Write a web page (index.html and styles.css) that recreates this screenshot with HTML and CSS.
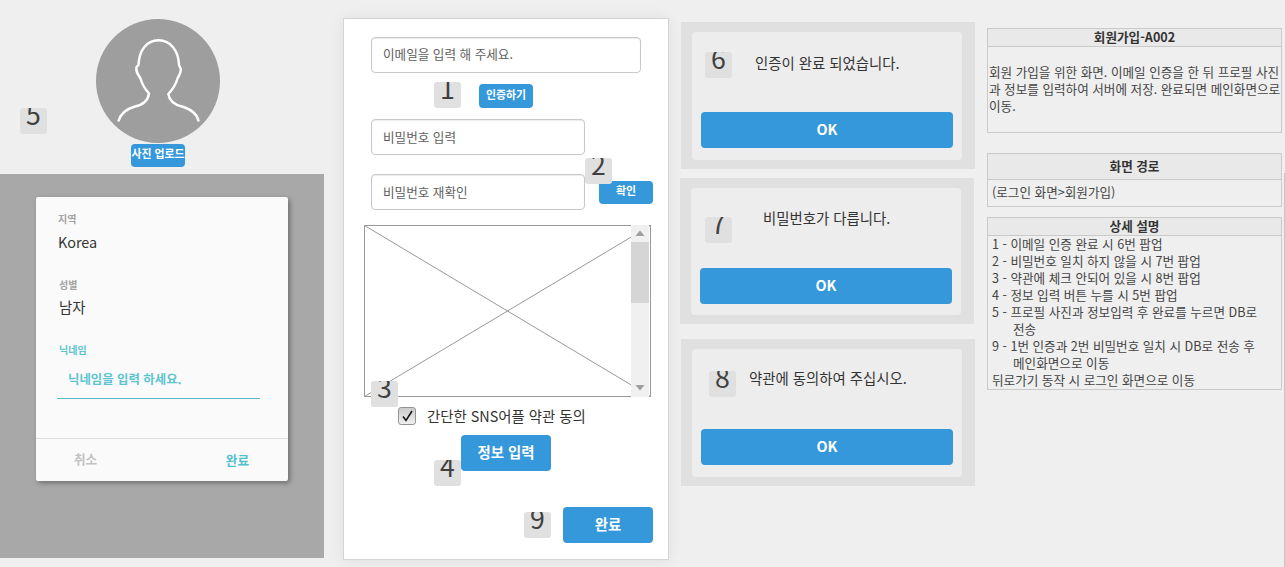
FILE: index.html
```html
<!DOCTYPE html>
<html lang="ko">
  <head>
    <meta charset="UTF-8" />
    <meta name="viewport" content="width=device-width, initial-scale=1.0" />
    <title>회원가입-A002</title>
    <link rel="stylesheet" href="styles.css">
  </head>
  <body>
    <div class="board">
      <section class="profile">
        <span class="badge badge-5">5</span>
        <svg class="avatar" viewBox="0 0 124 124">
          <circle cx="62" cy="62" r="62" fill="#9e9e9e" />
          <path
            d="M22.3 102.5 C24.5 94 32 89.500 39 87.500 C46 86 52 82 53 74.500 C49 70 46 65 44.500 59.500 C41.500 55 39.500 52 40.500 48 L42.500 46 C43 32 50 21.300 62.500 21.300 C75 21.300 82.500 32 83 46 L84.800 50 C85 53.500 83.500 56 81.500 59.500 C80 65 77 70 72.300 75 C73.500 82 79 86 86 87.500 C93 89.500 101 94 102.700 102.500"
            fill="none" stroke="#fff" stroke-width="2.4" stroke-linejoin="round" />
        </svg>
        <button class="btn btn-small btn-upload">사진 업로드</button>

        <div class="overlay">
          <div class="dialog">
            <div class="dialog-body">
              <label class="caption">지역</label>
              <div class="value">Korea</div>
              <label class="caption caption-gender">성별</label>
              <div class="value value-gender">남자</div>
              <label class="caption caption-active">닉네임</label>
              <div class="nickname">닉네임을 입력 하세요.</div>
            </div>
            <div class="dialog-footer">
              <span class="cancel">취소</span>
              <span class="done">완료</span>
            </div>
          </div>
        </div>
      </section>

      <section class="phone">
        <div class="input input-email">이메일을 입력 해 주세요.</div>
        <button class="btn btn-small btn-verify">인증하기</button>
        <div class="input">비밀번호 입력</div>
        <div class="confirm-row">
          <div class="input">비밀번호 재확인</div>
          <button class="btn btn-small">확인</button>
        </div>

        <div class="terms">
          <svg class="cross" viewBox="0 0 287 172">
            <path d="M.5 .5H286.500V171.500H.5Z M.5 .5L286.500 171.500 M286.500 .5L.5 171.500" />
          </svg>
          <div class="scrollbar">
            <svg viewBox="0 0 18 17"><path d="M4.500 11L9 5.500L13.500 11Z" /></svg>
            <div class="thumb"></div>
            <svg viewBox="0 0 18 17"><path d="M4.500 5L9 10.500L13.500 5Z" /></svg>
          </div>
        </div>

        <div class="agree">
          <span class="checkbox">
            <svg viewBox="0 0 16 16"><path d="M4 8.500L7 12.500L13 3" /></svg>
          </span>
          <span>간단한 SNS어플 약관 동의</span>
        </div>
        <button class="btn btn-info">정보 입력</button>
        <button class="btn btn-done">완료</button>

        <span class="badge badge-1">1</span>
        <span class="badge badge-2">2</span>
        <span class="badge badge-3">3</span>
        <span class="badge badge-4">4</span>
        <span class="badge badge-9">9</span>
      </section>

      <section class="popups">
        <div class="popup">
          <div class="popup-box">
            <p class="message-verified">인증이 완료 되었습니다.</p>
            <button class="btn">OK</button>
          </div>
          <span class="badge badge-6">6</span>
        </div>
        <div class="popup popup-password">
          <div class="popup-box">
            <p class="message-password">비밀번호가 다릅니다.</p>
            <button class="btn">OK</button>
          </div>
          <span class="badge badge-7">7</span>
        </div>
        <div class="popup">
          <div class="popup-box">
            <p class="message-terms">약관에 동의하여 주십시오.</p>
            <button class="btn">OK</button>
          </div>
          <span class="badge badge-8">8</span>
        </div>
      </section>

      <aside class="notes">
        <div class="note note-summary">
          <h2>회원가입-A002</h2>
          <p>회원 가입을 위한 화면. 이메일 인증을 한 뒤 프로필 사진<br>과 정보를 입력하여 서버에 저장. 완료되면 메인화면으로<br>이동.</p>
        </div>
        <div class="note note-path">
          <h2>화면 경로</h2>
          <p>(로그인 화면&gt;회원가입)</p>
        </div>
        <div class="note note-detail">
          <h2>상세 설명</h2>
          <ul>
            <li>1 - 이메일 인증 완료 시 6번 팝업</li>
            <li>2 - 비밀번호 일치 하지 않을 시 7번 팝업</li>
            <li>3 - 약관에 체크 안되어 있을 시 8번 팝업</li>
            <li>4 - 정보 입력 버튼 누를 시 5번 팝업</li>
            <li>5 - 프로필 사진과 정보입력 후 완료를 누르면 DB로<br>전송</li>
            <li>9 - 1번 인증과 2번 비밀번호 일치 시 DB로 전송 후<br>메인화면으로 이동</li>
            <li>뒤로가기 동작 시 로그인 화면으로 이동</li>
          </ul>
        </div>
      </aside>
      <div class="edge"></div>
    </div>
  </body>
</html>
```

FILE: styles.css
```css
* {
  margin: 0;
  padding: 0;
  box-sizing: border-box;
}
body {
  background-color: #efefef;
  color: #333;
  font-family: "Noto Sans CJK KR", "Noto Sans", sans-serif;
  font-size: 12.6px;
}
.board {
  display: flex;
  align-items: flex-start;
  width: 1285px;
  height: 567px;
  overflow: hidden;
}

/* shared */
.btn {
  display: block;
  height: 36px;
  padding-bottom: 2px;
  border: none;
  border-radius: 4px;
  background: #3598db;
  color: #fff;
  font-family: inherit;
  font-size: 14.4px;
  font-weight: bold;
  line-height: 34px;
  text-align: center;
  white-space: nowrap;
}
.btn-small {
  width: 54px;
  height: 23px;
  padding-bottom: 4px;
  font-size: 10.9px;
  line-height: 19px;
}
.badge {
  position: absolute;
  width: 27px;
  height: 26px;
  border-radius: 3px;
  background: #e0e0e0;
  color: #404040;
  font-size: 26.67px;
  line-height: 11px;
  text-align: center;
  overflow: hidden;
}

/* profile */
.profile {
  position: relative;
  display: flex;
  flex-direction: column;
  width: 324px;
  padding-top: 19px;
}
.avatar {
  display: block;
  width: 124px;
  height: 124px;
  margin-left: 96px;
}
.btn-upload {
  margin: 1px 0 7px 131px;
}
.overlay {
  height: 384px;
  padding: 23px 36px;
  background: #a8a8a8;
}
.dialog {
  height: 284px;
  border-radius: 2px;
  background: #fafafa;
  box-shadow: 2px 2px 5px rgba(0, 0, 0, 0.35);
}
.dialog-body {
  height: 242px;
  padding: 15px 28px 0 21px;
  border-bottom: 1px solid #dcdcdc;
}
.caption {
  display: block;
  height: 14px;
  padding-left: 1px;
  color: #a3a3a3;
  font-size: 10px;
  font-weight: bold;
  line-height: 14px;
}
.caption-gender {
  margin-top: 26px;
  padding-left: 2px;
}
.caption-active {
  margin-top: 26px;
  padding-left: 2px;
  color: #5bc4d0;
}
.value {
  height: 20px;
  margin-top: 6px;
  padding-left: 1px;
  font-size: 14.4px;
  line-height: 20px;
}
.value-gender {
  margin-top: 5px;
  padding-left: 2px;
}
.nickname {
  height: 42px;
  padding: 12px 0 0 11px;
  border-bottom: 1px solid #5bb8c6;
  color: #5bc4d0;
  font-size: 12.4px;
  font-weight: bold;
  line-height: 20px;
}
.dialog-footer {
  display: flex;
  justify-content: space-between;
  padding: 10px 39px 0 38px;
  font-weight: bold;
  line-height: 20px;
}
.cancel {
  color: #c2c2c2;
}
.done {
  padding-top: 1px;
  color: #4fc0ce;
}

/* sign-up form */
.phone {
  position: relative;
  display: flex;
  flex-direction: column;
  width: 326px;
  height: 542px;
  margin: 18px 0 0 19px;
  padding: 18px 15px 0 20px;
  border: 1px solid #d4d4d4;
  background: #fff;
  box-shadow: 0 0 14px rgba(0, 0, 0, 0.07);
}
.input {
  width: 214px;
  height: 36px;
  margin-left: 7px;
  padding-left: 11px;
  border: 1px solid #c8c8c8;
  border-radius: 4px;
  box-shadow: inset 0 1px 1px rgba(0, 0, 0, 0.08);
  color: #606060;
  line-height: 33px;
}
.input-email {
  width: 270px;
  line-height: 31px;
}
.btn-verify {
  height: 24px;
  margin: 11px 0 11px 115px;
}
.confirm-row {
  display: flex;
  align-items: center;
  justify-content: space-between;
  margin-top: 19px;
}
.terms {
  display: flex;
  justify-content: flex-end;
  width: 287px;
  height: 172px;
  margin-top: 15px;
  padding-right: 2px;
  position: relative;
}
.cross {
  position: absolute;
  left: 0;
  top: 0;
  width: 287px;
  height: 172px;
  fill: none;
  stroke: #999;
}
.scrollbar {
  position: relative;
  display: flex;
  flex-direction: column;
  width: 18px;
  background: #f0f0f0;
}
.scrollbar svg {
  width: 18px;
  height: 17px;
  fill: #9e9e9e;
}
.thumb {
  height: 61px;
  margin-bottom: auto;
  background: #d5d5d5;
}
.agree {
  display: flex;
  align-items: center;
  height: 18px;
  margin: 10px 0 10px 34px;
  gap: 11px;
  font-size: 14.4px;
  line-height: 18px;
}
.checkbox {
  width: 18px;
  height: 18px;
  border: 1px solid #959595;
  border-radius: 3px;
  background: linear-gradient(#ccc, #eee);
}
.checkbox svg {
  display: block;
  fill: none;
  stroke: #111;
  stroke-width: 1.5;
}
.btn-info {
  width: 90px;
  margin-left: 97px;
}
.btn-done {
  width: 90px;
  margin: 36px 0 0 199px;
}

/* popups */
.popups {
  display: flex;
  flex-direction: column;
  width: 295px;
  margin: 22px 0 0 11px;
}
.popup {
  position: relative;
  width: 294px;
  height: 147px;
  margin-left: 1px;
  padding: 10px 13px 9px 11px;
  background: #e0e0e0;
}
.popup-password {
  height: 146px;
  margin: 9px 0 15px;
  margin-left: 0;
}
.popup-box {
  height: 100%;
  padding: 0 9px;
  border-radius: 4px;
  background: #ededed;
}
.popup-box p {
  height: 80px;
  font-size: 14.4px;
  line-height: 20px;
  white-space: nowrap;
}
.popup-box .btn {
  width: 100%;
}
.message-verified {
  padding: 21px 0 0 54px;
}
.message-password {
  padding: 20px 0 0 63px;
}
.message-terms {
  padding: 19px 0 0 48px;
}

/* notes */
.notes {
  display: flex;
  flex-direction: column;
  width: 295px;
  margin: 28px 0 0 12px;
}
.note {
  border: 1px solid #cacaca;
  line-height: 17px;
  color: #444;
  white-space: nowrap;
}
.note h2 {
  height: 18px;
  border-bottom: 1px solid #cacaca;
  background: #e9e9e9;
  color: #333;
  font-size: 12.6px;
  line-height: 15px;
  text-align: center;
}
.note-summary {
  height: 105px;
}
.note-summary p {
  padding: 16px 0 0 1px;
}
.note-path {
  height: 54px;
  margin: 20px 0 10px;
}
.note-path h2 {
  height: 26px;
  line-height: 23px;
}
.note-path p {
  padding-left: 4px;
  line-height: 24px;
}
.note-detail ul {
  height: 153px;
  list-style: none;
}
.note-detail li {
  position: relative;
  top: -1px;
  padding-left: 25px;
  text-indent: -21px;
}
.edge {
  width: 1px;
  height: 394px;
  margin: 173px 0 0 2px;
  background: #c4c4c4;
}

/* step numbers */
.badge-5 {
  left: 20px;
  top: 108px;
}
.badge-1 {
  left: 90px;
  top: 63px;
}
.badge-2 {
  left: 241px;
  top: 139px;
}
.badge-3 {
  left: 27px;
  top: 362px;
}
.badge-4 {
  left: 90px;
  top: 441px;
}
.badge-9 {
  left: 180px;
  top: 493px;
}
.badge-6 {
  left: 24px;
  top: 30px;
}
.badge-7 {
  left: 25px;
  top: 39px;
}
.badge-8 {
  left: 28px;
  top: 32px;
}
```
